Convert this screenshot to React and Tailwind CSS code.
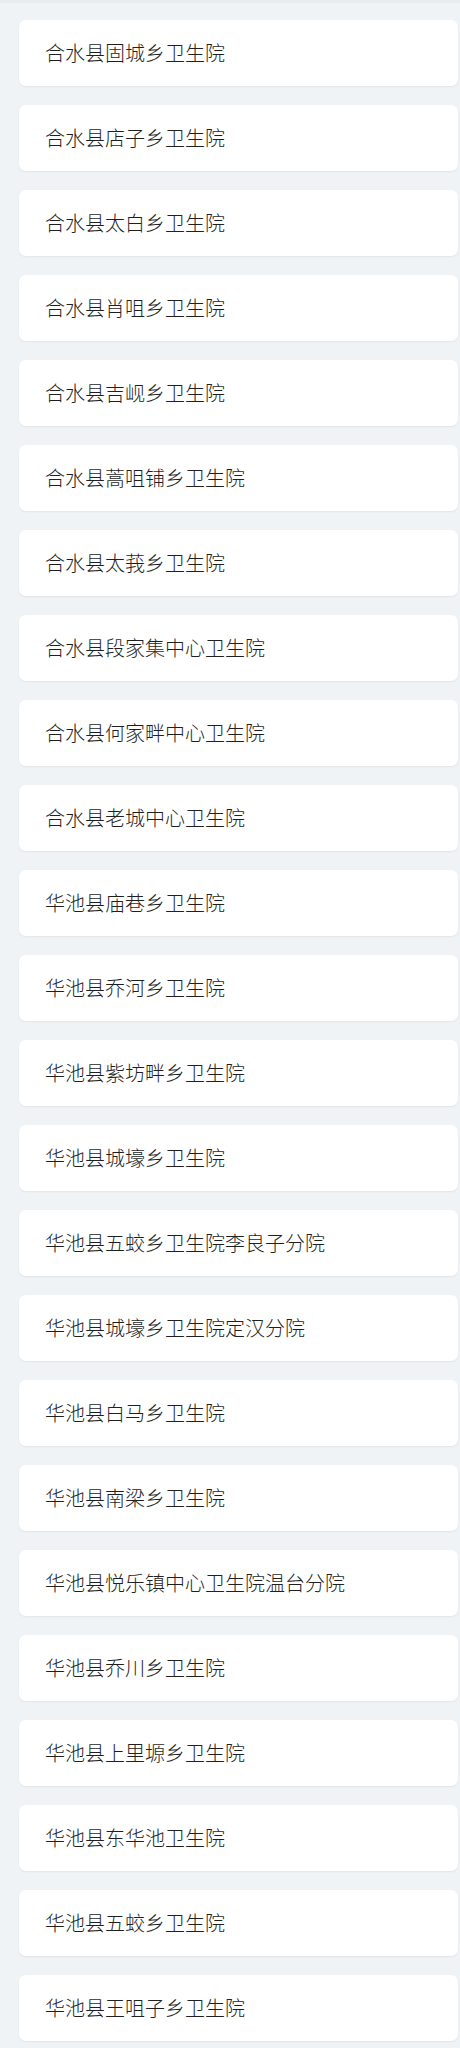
const items = [
  "合水县固城乡卫生院",
  "合水县店子乡卫生院",
  "合水县太白乡卫生院",
  "合水县肖咀乡卫生院",
  "合水县吉岘乡卫生院",
  "合水县蒿咀铺乡卫生院",
  "合水县太莪乡卫生院",
  "合水县段家集中心卫生院",
  "合水县何家畔中心卫生院",
  "合水县老城中心卫生院",
  "华池县庙巷乡卫生院",
  "华池县乔河乡卫生院",
  "华池县紫坊畔乡卫生院",
  "华池县城壕乡卫生院",
  "华池县五蛟乡卫生院李良子分院",
  "华池县城壕乡卫生院定汉分院",
  "华池县白马乡卫生院",
  "华池县南梁乡卫生院",
  "华池县悦乐镇中心卫生院温台分院",
  "华池县乔川乡卫生院",
  "华池县上里塬乡卫生院",
  "华池县东华池卫生院",
  "华池县五蛟乡卫生院",
  "华池县王咀子乡卫生院",
];

export default function App() {
  return (
    <div
      className="min-h-[2048px] w-[460px] bg-[#f0f3f6] border-t-[3px] border-[#e8ecef]"
      style={{ fontFamily: '"Noto Sans CJK SC", "Noto Sans", sans-serif' }}
    >
      <div className="flex flex-col gap-[19px] pt-[17px] pl-[19px] pr-[2px]">
        {items.map((t) => (
          <div
            key={t}
            className="h-[66px] flex items-center pl-[26px] bg-white rounded-[7px] shadow-[0_1px_2px_rgba(0,0,0,0.06)] text-[20px] font-light text-[#1f1f1f]"
          >
            {t}
          </div>
        ))}
      </div>
    </div>
  );
}
